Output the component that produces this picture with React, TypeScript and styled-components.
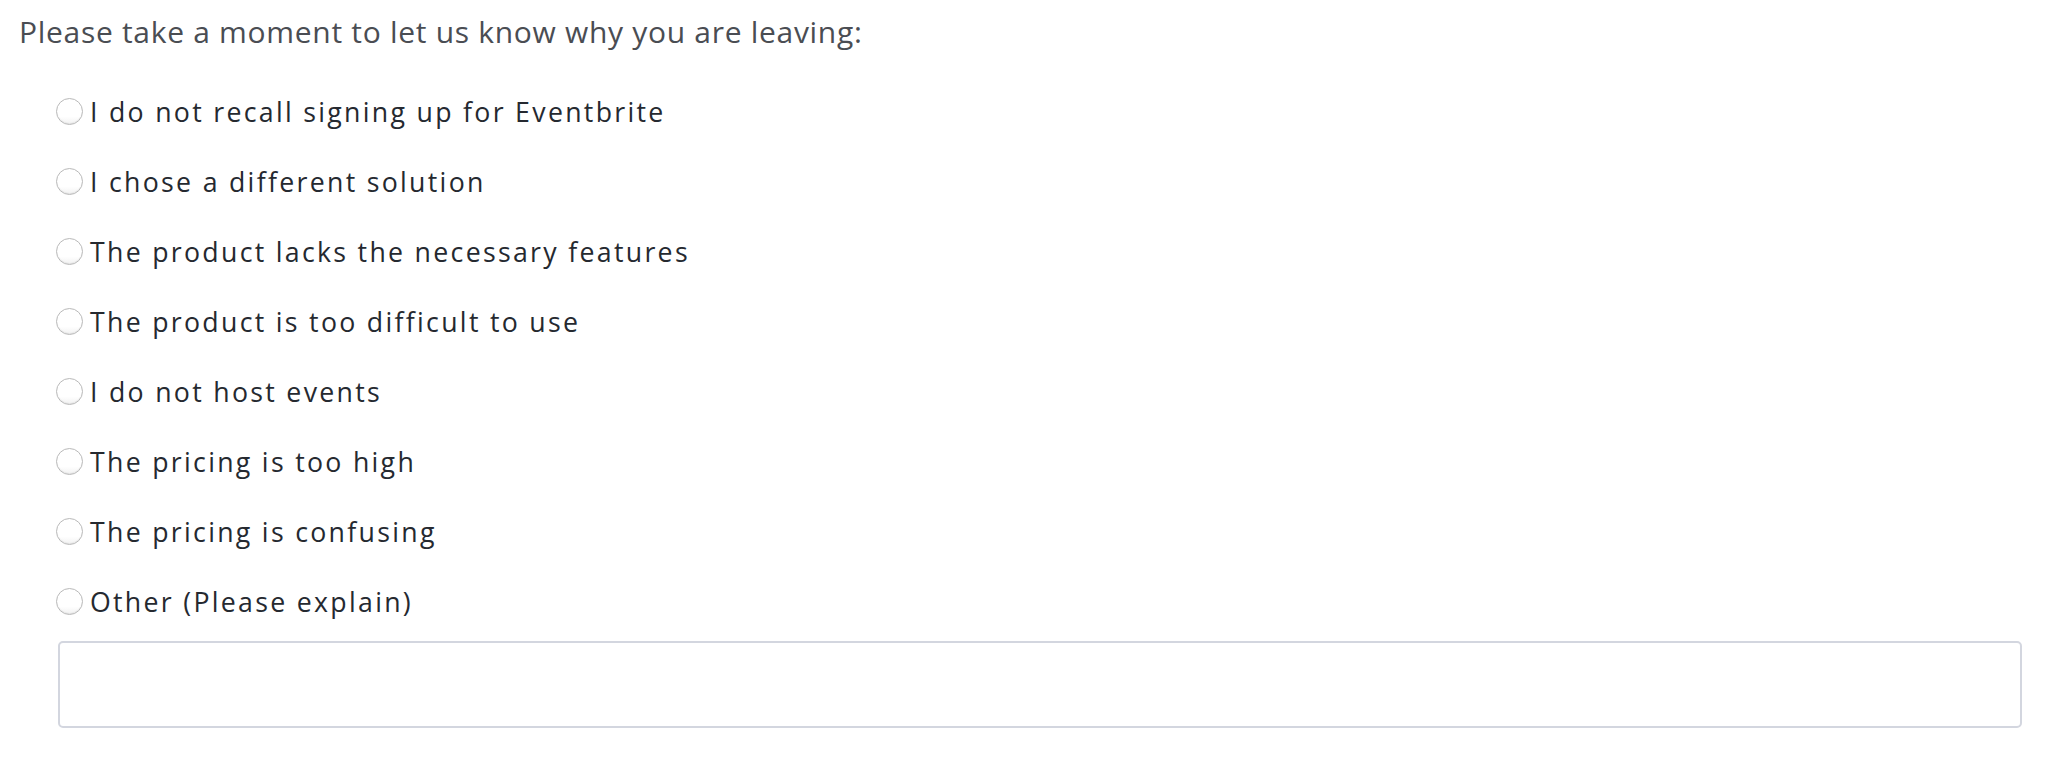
import React, { useState } from 'react';
import styled, { createGlobalStyle } from 'styled-components';

const GlobalStyle = createGlobalStyle`
  html, body {
    margin: 0;
    padding: 0;
    background: #ffffff;
  }
  body {
    font-family: 'Open Sans', 'Liberation Sans', Arial, sans-serif;
  }
`;

const reasons = [
  'I do not recall signing up for Eventbrite',
  'I chose a different solution',
  'The product lacks the necessary features',
  'The product is too difficult to use',
  'I do not host events',
  'The pricing is too high',
  'The pricing is confusing',
  'Other (Please explain)',
];

const Page = styled.section`
  display: flex;
  flex-direction: column;
  padding: 12px 27px 0 19px;
`;

const Question = styled.p`
  margin: 0;
  font-size: 30px;
  line-height: 40px;
  letter-spacing: 0.7px;
  color: #4a4d53;
`;

const Options = styled.div`
  display: flex;
  flex-direction: column;
  padding: 24px 0 0 37px;
`;

const Row = styled.label`
  display: flex;
  align-items: center;
  gap: 7px;
  height: 70px;
  cursor: pointer;
`;

const Radio = styled.span<{ $checked: boolean }>`
  position: relative;
  flex: none;
  width: 25px;
  height: 25px;
  border-radius: 50%;
  border: 1.5px solid #b9b9b9;
  background: linear-gradient(180deg, #ffffff 0%, #ffffff 70%, #f1f1f1 100%);
  box-shadow: inset 0 -1px 1px rgba(0, 0, 0, 0.06);

  &::after {
    content: '';
    position: absolute;
    inset: 6px;
    border-radius: 50%;
    background: ${(p) => (p.$checked ? '#3d64ff' : 'transparent')};
  }
`;

const HiddenInput = styled.input`
  position: absolute;
  opacity: 0;
  width: 0;
  height: 0;
`;

const LabelText = styled.span`
  font-size: 26.7px;
  letter-spacing: 2.3px;
  color: #252930;
`;

const Explain = styled.textarea`
  display: block;
  box-sizing: border-box;
  margin: 5px 0 0 2px;
  width: calc(100% - 2px);
  height: 87px;
  border: 2px solid #d3d6df;
  border-radius: 5px;
  resize: none;
  outline: none;
  padding: 10px 14px;
  font-family: inherit;
  font-size: 26px;
  color: #252930;
`;

export default function App() {
  const [choice, setChoice] = useState<number | null>(null);

  return (
    <>
      <GlobalStyle />
      <Page>
        <Question>Please take a moment to let us know why you are leaving:</Question>
        <Options>
          {reasons.map((reason, i) => (
            <Row key={reason}>
              <HiddenInput
                type="radio"
                name="reason"
                checked={choice === i}
                onChange={() => setChoice(i)}
              />
              <Radio $checked={choice === i} />
              <LabelText>{reason}</LabelText>
            </Row>
          ))}
          <Explain aria-label="Please explain" />
        </Options>
      </Page>
    </>
  );
}
